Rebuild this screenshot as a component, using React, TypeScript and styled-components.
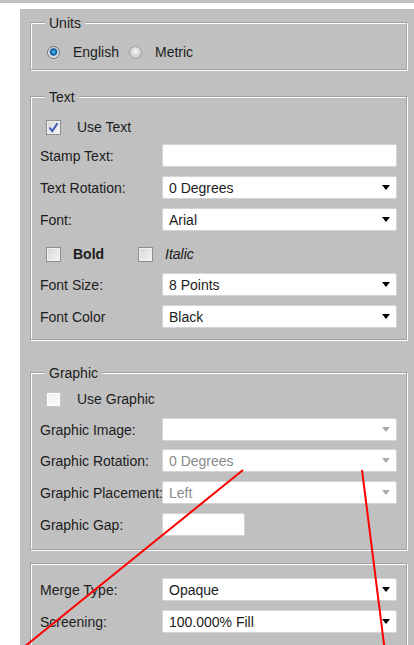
import React from 'react'
import styled, { createGlobalStyle } from 'styled-components'

const GlobalStyle = createGlobalStyle`
  html, body {
    margin: 0;
    padding: 0;
    background: #fff;
  }
  body {
    font-family: "Liberation Sans", Arial, sans-serif;
    font-size: 14px;
    color: #1c1c1c;
  }
`

const PageStyled = styled.div`
    position: relative;
    width: 414px;
    height: 645px;
    overflow: hidden;
    display: flex;
    flex-direction: column;
    background: #fff;
`

const TopEdgeStyled = styled.div`
    height: 3px;
    flex: none;
    background: #c0c0c0;
`

const BodyStyled = styled.div`
    flex: 1;
    display: flex;
    padding: 6px 0 0 20px;
`

const PanelStyled = styled.div`
    flex: 1;
    display: flex;
    flex-direction: column;
    background: #c0c0c0;
    padding: 0 7px 20px 10px;
`

const GroupStyled = styled.section<{ $mt: number, $pt: number, $pb: number }>`
    position: relative;
    flex: none;
    display: flex;
    flex-direction: column;
    margin-top: ${p => p.$mt}px;
    padding: ${p => p.$pt}px 8px ${p => p.$pb}px 9px;
    border: 1px solid #a0a0a0;
    box-shadow: inset 1px 1px 0 #fff, 1px 1px 0 #fff;
`

const CaptionStyled = styled.span`
    position: absolute;
    top: -8px;
    left: 14px;
    padding: 0 4px;
    line-height: 16px;
    background: #c0c0c0;
`

const FieldRowStyled = styled.div<{ $mt?: number }>`
    flex: none;
    display: flex;
    align-items: center;
    height: 23px;
    margin-top: ${p => p.$mt ?? 9}px;
`

const LabelStyled = styled.span`
    flex: none;
    width: 122px;
    white-space: nowrap;
`

const BoxStyled = styled.div<{ $disabled?: boolean, $width?: number }>`
    box-sizing: border-box;
    width: ${p => p.$width ?? 235}px;
    height: 23px;
    display: flex;
    align-items: center;
    justify-content: space-between;
    padding: 0 6px 0 6px;
    background: #fff;
    border: 1px solid #d4d4d4;
    border-radius: 2px;
    color: ${p => p.$disabled ? '#8a8a8a' : '#1c1c1c'};
    white-space: nowrap;
`

const ArrowStyled = styled.span<{ $disabled?: boolean }>`
    width: 0;
    height: 0;
    border-left: 4px solid transparent;
    border-right: 4px solid transparent;
    border-top: 5px solid ${p => p.$disabled ? '#a9a9a9' : '#000'};
`

const CheckRowStyled = styled.div<{ $mt?: number }>`
    flex: none;
    display: flex;
    align-items: center;
    height: 16px;
    margin-top: ${p => p.$mt ?? 0}px;
    padding-left: 6px;
`

const CheckItemStyled = styled.label<{ $gap: number, $width?: number }>`
    display: flex;
    align-items: center;
    gap: ${p => p.$gap}px;
    width: ${p => p.$width ? `${p.$width}px` : 'auto'};
`

const CheckBoxStyled = styled.span<{ $muted?: boolean }>`
    box-sizing: border-box;
    width: 15px;
    height: 15px;
    display: grid;
    place-items: center;
    border: 1px solid ${p => p.$muted ? '#c6c6c6' : '#8e8f8f'};
    background: ${p => p.$muted
        ? 'linear-gradient(#f2f2f2, #fafafa)'
        : 'linear-gradient(135deg, #d6d6d6, #f6f6f6)'};
    box-shadow: inset 0 0 0 1px ${p => p.$muted ? '#fdfdfd' : '#f0f0f0'};
`

const BoldTextStyled = styled.span`
    font-weight: bold;
`

const ItalicTextStyled = styled.span`
    font-style: italic;
`

const RadioRowStyled = styled.div`
    flex: none;
    display: flex;
    align-items: center;
    height: 16px;
    padding-left: 7px;
`

const RadioItemStyled = styled.label<{ $width?: number }>`
    display: flex;
    align-items: center;
    gap: 13px;
    width: ${p => p.$width ? `${p.$width}px` : 'auto'};
`

const RadioStyled = styled.span<{ $on?: boolean }>`
    box-sizing: border-box;
    width: 13px;
    height: 13px;
    border-radius: 50%;
    border: 1px solid ${p => p.$on ? '#6a6e72' : '#a0a0a0'};
    background: ${p => p.$on
        ? 'radial-gradient(circle at 50% 45%, #8fd6ff 0, #2388d0 1.5px, #135c98 3.3px, #cfd3d6 4.2px, #ececec 5.5px)'
        : 'radial-gradient(circle at 50% 40%, #fafafa 0, #e6e6e6 2.5px, #cbcbcb 6px)'};
`

const OverlayStyled = styled.svg`
    position: absolute;
    top: 0;
    left: 0;
    pointer-events: none;
`

const CheckMark = () => (
    <svg width="11" height="11" viewBox="0 0 11 11">
        <path d="M1.5 5.5 L4.3 9 L9.5 1.2" fill="none" stroke="#3d56b6" strokeWidth="2" />
    </svg>
)

const Check = ({ checked, muted }: { checked?: boolean, muted?: boolean }) => (
    <CheckBoxStyled $muted={muted}>{checked && <CheckMark />}</CheckBoxStyled>
)

const Select = ({ value, disabled }: { value: string, disabled?: boolean }) => (
    <BoxStyled $disabled={disabled}>
        <span>{value}</span>
        <ArrowStyled $disabled={disabled} />
    </BoxStyled>
)

const Field = ({ label, children, mt }: { label: string, children: React.ReactNode, mt?: number }) => (
    <FieldRowStyled $mt={mt}>
        <LabelStyled>{label}</LabelStyled>
        {children}
    </FieldRowStyled>
)

export default function App() {
    return (
        <PageStyled>
            <GlobalStyle />
            <TopEdgeStyled />
            <BodyStyled>
                <PanelStyled>
                    <GroupStyled $mt={13} $pt={21} $pb={9}>
                        <CaptionStyled>Units</CaptionStyled>
                        <RadioRowStyled>
                            <RadioItemStyled $width={82}>
                                <RadioStyled $on />
                                English
                            </RadioItemStyled>
                            <RadioItemStyled>
                                <RadioStyled />
                                Metric
                            </RadioItemStyled>
                        </RadioRowStyled>
                    </GroupStyled>

                    <GroupStyled $mt={26} $pt={22} $pb={11}>
                        <CaptionStyled>Text</CaptionStyled>
                        <CheckRowStyled>
                            <CheckItemStyled $gap={16}>
                                <Check checked />
                                Use Text
                            </CheckItemStyled>
                        </CheckRowStyled>
                        <Field label="Stamp Text:">
                            <BoxStyled />
                        </Field>
                        <Field label="Text Rotation:">
                            <Select value="0 Degrees" />
                        </Field>
                        <Field label="Font:">
                            <Select value="Arial" />
                        </Field>
                        <CheckRowStyled $mt={15}>
                            <CheckItemStyled $gap={12} $width={92}>
                                <Check />
                                <BoldTextStyled>Bold</BoldTextStyled>
                            </CheckItemStyled>
                            <CheckItemStyled $gap={12}>
                                <Check />
                                <ItalicTextStyled>Italic</ItalicTextStyled>
                            </CheckItemStyled>
                        </CheckRowStyled>
                        <Field label="Font Size:" mt={11}>
                            <Select value="8 Points" />
                        </Field>
                        <Field label="Font Color">
                            <Select value="Black" />
                        </Field>
                    </GroupStyled>

                    <GroupStyled $mt={32} $pt={18} $pb={13}>
                        <CaptionStyled>Graphic</CaptionStyled>
                        <CheckRowStyled>
                            <CheckItemStyled $gap={16}>
                                <Check muted />
                                Use Graphic
                            </CheckItemStyled>
                        </CheckRowStyled>
                        <Field label="Graphic Image:" mt={11}>
                            <Select value="" disabled />
                        </Field>
                        <Field label="Graphic Rotation:" mt={8}>
                            <Select value="0 Degrees" disabled />
                        </Field>
                        <Field label="Graphic Placement:">
                            <Select value="Left" disabled />
                        </Field>
                        <Field label="Graphic Gap:">
                            <BoxStyled $width={83} />
                        </Field>
                    </GroupStyled>

                    <GroupStyled $mt={13} $pt={14} $pb={24}>
                        <Field label="Merge Type:" mt={0}>
                            <Select value="Opaque" />
                        </Field>
                        <Field label="Screening:">
                            <Select value="100.000% Fill" />
                        </Field>
                    </GroupStyled>
                </PanelStyled>
            </BodyStyled>

            {/* red markup strokes drawn over the form */}
            <OverlayStyled width="414" height="645" viewBox="0 0 414 645">
                <line x1="243" y1="470" x2="8" y2="660" stroke="#ff0000" strokeWidth="2" />
                <line x1="362" y1="470" x2="386" y2="660" stroke="#ff0000" strokeWidth="2" />
            </OverlayStyled>
        </PageStyled>
    )
}
